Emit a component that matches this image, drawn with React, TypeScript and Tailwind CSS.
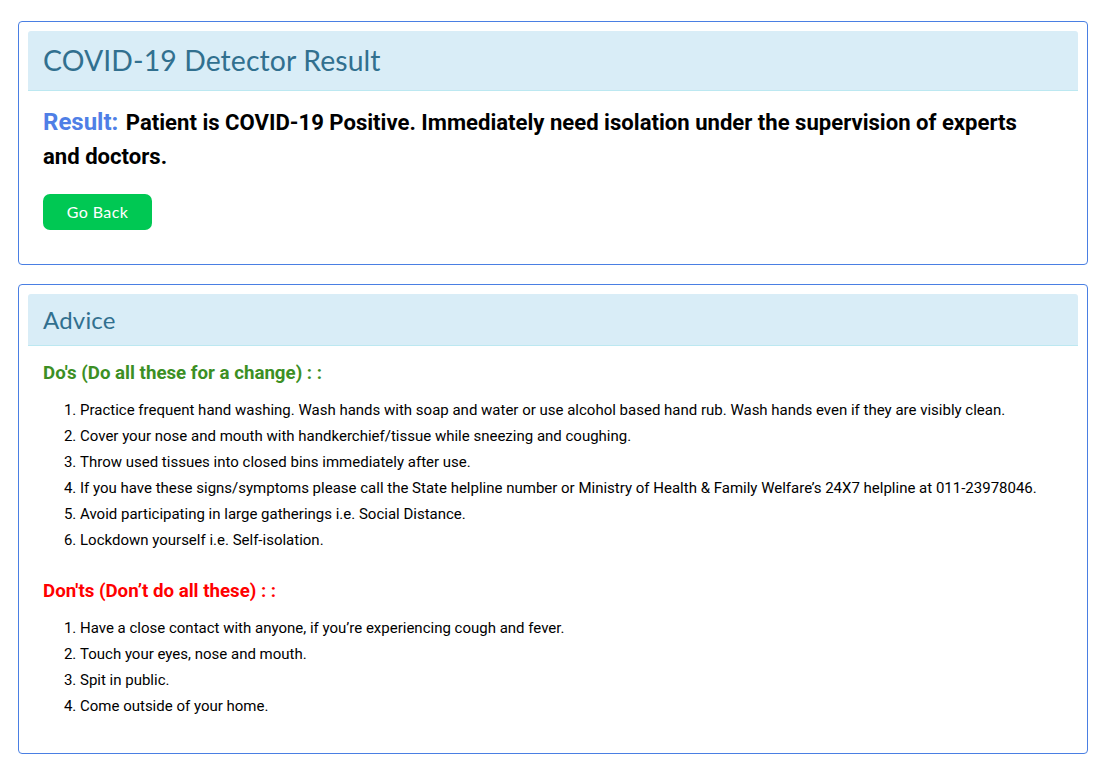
const dos = [
  "Practice frequent hand washing. Wash hands with soap and water or use alcohol based hand rub. Wash hands even if they are visibly clean.",
  "Cover your nose and mouth with handkerchief/tissue while sneezing and coughing.",
  "Throw used tissues into closed bins immediately after use.",
  "If you have these signs/symptoms please call the State helpline number or Ministry of Health & Family Welfare\u2019s 24X7 helpline at 011-23978046.",
  "Avoid participating in large gatherings i.e. Social Distance.",
  "Lockdown yourself i.e. Self-isolation.",
];

const donts = [
  "Have a close contact with anyone, if you\u2019re experiencing cough and fever.",
  "Touch your eyes, nose and mouth.",
  "Spit in public.",
  "Come outside of your home.",
];

const headingFont = "font-['Lato','Open_Sans',sans-serif]";

function Card(props: { title: string; big?: boolean; children: React.ReactNode }) {
  return (
    <section className="rounded-[4px] border border-[#4a7fe3] bg-white p-[9px]">
      <div
        className={
          props.big
            ? `rounded-t-[3px] border-b border-[#bce8f1] bg-[#d9edf7] px-[15px] pt-[10px] pb-[11px] ${headingFont} text-[28.4px] leading-[38px] tracking-[0.1px] text-[#31708f]`
            : `rounded-t-[3px] border-b border-[#bce8f1] bg-[#d9edf7] px-[15px] pt-[11px] pb-[10px] ${headingFont} text-[24px] leading-[30px] tracking-[0.2px] text-[#31708f]`
        }
      >
        {props.title}
      </div>
      <div className="px-[15px]">{props.children}</div>
    </section>
  );
}

function AdviceList(props: { items: string[] }) {
  return (
    <ol className="mt-[12px] list-decimal pl-[37px] text-[15px] leading-[26px] text-black">
      {props.items.map((item) => (
        <li key={item}>{item}</li>
      ))}
    </ol>
  );
}

export default function App() {
  return (
    <div className="min-h-screen bg-white px-[18px] pt-[21px] pb-[8px] font-['Roboto',sans-serif]">
      <div className="flex flex-col gap-[19px]">
        <Card title="COVID-19 Detector Result" big>
          <p className="mt-[14px] pr-[12px] text-[22.1px] font-bold leading-[34px] text-black">
            <span className="mr-[2px] text-[24px] leading-[20px] text-[#4f7fe6]">Result:</span> Patient is
            COVID-19 Positive. Immediately need isolation under the supervision of experts and doctors.
          </p>
          <button
            className={`mt-[21px] mb-[25px] h-[36px] w-[109px] rounded-[7px] bg-[#00c853] ${headingFont} text-[16px] tracking-[0.4px] text-white`}
          >
            Go Back
          </button>
        </Card>

        <Card title="Advice">
          <h3 className="mt-[15px] text-[18.7px] font-bold leading-[24px] text-[#3c8f24]">
            Do's (Do all these for a change) : :
          </h3>
          <AdviceList items={dos} />
          <h3 className="mt-[26px] text-[18.7px] font-bold leading-[24px] text-[#ff0000]">
            Don'ts (Don&rsquo;t do all these) : :
          </h3>
          <div className="pb-[25px]">
            <AdviceList items={donts} />
          </div>
        </Card>
      </div>
    </div>
  );
}
